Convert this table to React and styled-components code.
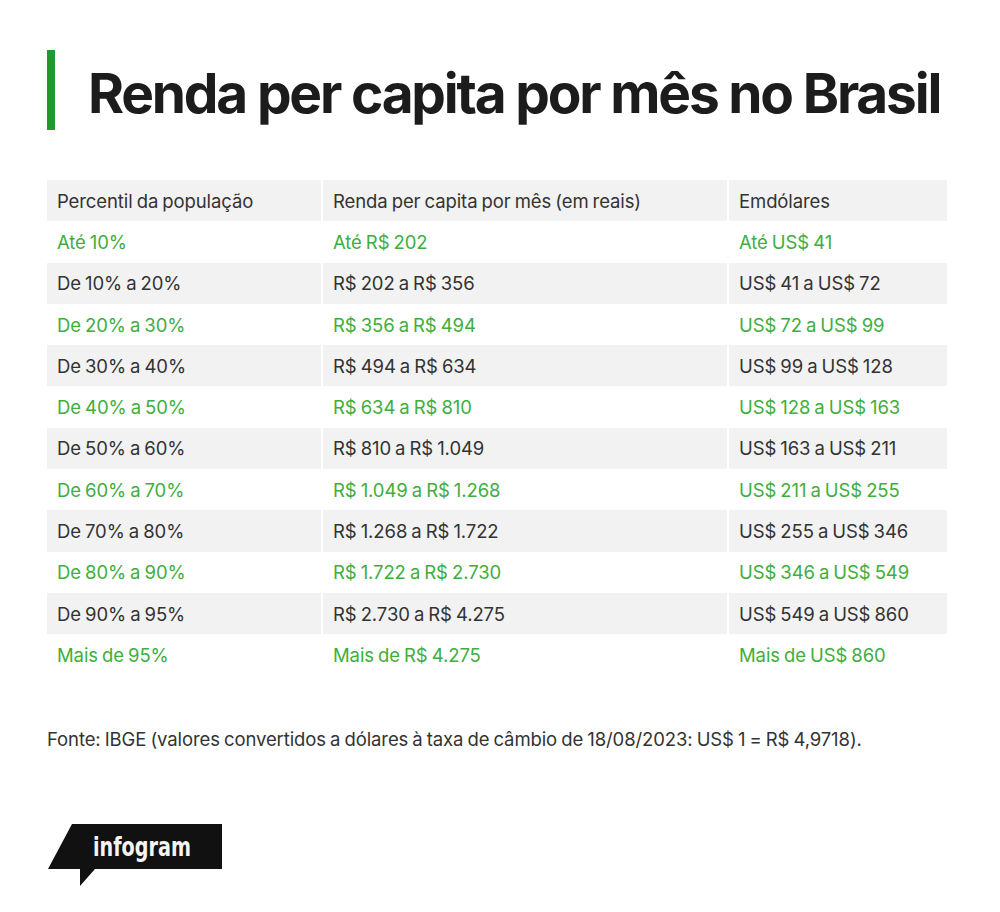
import React from 'react';
import styled, { createGlobalStyle } from 'styled-components';

const GlobalStyle = createGlobalStyle`
  html, body {
    margin: 0;
    padding: 0;
    background: #fff;
  }
  body {
    font-family: Inter, "Liberation Sans", Arial, sans-serif;
    color: #333;
  }
`;

const Page = styled.div`
  width: 1000px;
  height: 912px;
  padding: 50px 0 0 47px;
  box-sizing: border-box;
`;

const Header = styled.div`
  display: flex;
  align-items: center;
  gap: 33px;
  height: 80px;
`;

const Bar = styled.div`
  width: 8px;
  height: 80px;
  background: #1f9a2c;
`;

const Title = styled.h1`
  margin: 0;
  padding-top: 6px;
  font-family: Inter, "Liberation Sans", Arial, sans-serif;
  font-weight: 700;
  font-size: 55px;
  letter-spacing: -2.2px;
  color: #1c1c1c;
  white-space: nowrap;
`;

const Table = styled.div`
  margin-top: 50px;
  width: 900px;
`;

const Row = styled.div`
  display: grid;
  grid-template-columns: 274px 404px 218px;
  column-gap: 2px;
  height: 41.3px;
`;

const Cell = styled.div`
  display: flex;
  align-items: center;
  padding-left: 10px;
  background: ${p => (p.$shaded ? '#f2f2f2' : '#fff')};
  color: ${p => (p.$green ? '#3fae3c' : '#333')};
  font-size: 18.5px;
  letter-spacing: -0.1px;
  word-spacing: -1px;
  white-space: nowrap;
`;

const Source = styled.p`
  margin: 52px 0 0;
  font-size: 18.5px;
  letter-spacing: -0.1px;
  word-spacing: -1px;
  color: #333;
`;

const Logo = styled.div`
  margin-top: 74px;
  width: 210px;
  height: 64px;
`;

const header = ['Percentil da população', 'Renda per capita por mês (em reais)', 'Emdólares'];

const rows = [
  ['Até 10%', 'Até R$ 202', 'Até US$ 41'],
  ['De 10% a 20%', 'R$ 202 a R$ 356', 'US$ 41 a US$ 72'],
  ['De 20% a 30%', 'R$ 356 a R$ 494', 'US$ 72 a US$ 99'],
  ['De 30% a 40%', 'R$ 494 a R$ 634', 'US$ 99 a US$ 128'],
  ['De 40% a 50%', 'R$ 634 a R$ 810', 'US$ 128 a US$ 163'],
  ['De 50% a 60%', 'R$ 810 a R$ 1.049', 'US$ 163 a US$ 211'],
  ['De 60% a 70%', 'R$ 1.049 a R$ 1.268', 'US$ 211 a US$ 255'],
  ['De 70% a 80%', 'R$ 1.268 a R$ 1.722', 'US$ 255 a US$ 346'],
  ['De 80% a 90%', 'R$ 1.722 a R$ 2.730', 'US$ 346 a US$ 549'],
  ['De 90% a 95%', 'R$ 2.730 a R$ 4.275', 'US$ 549 a US$ 860'],
  ['Mais de 95%', 'Mais de R$ 4.275', 'Mais de US$ 860'],
];

function InfogramLogo() {
  return (
    <svg width="210" height="64" viewBox="0 0 210 64">
      <path d="M25 0 H175 V45 H48 L33 62 V45 H1 Z" fill="#111" />
      <text
        x="46"
        y="32"
        fill="#f4f4f4"
        fontFamily="'DejaVu Sans', sans-serif"
        fontWeight="700"
        fontSize="27"
        textLength="98"
        lengthAdjust="spacingAndGlyphs"
      >
        infogram
      </text>
    </svg>
  );
}

export default function App() {
  return (
    <Page>
      <GlobalStyle />
      <Header>
        <Bar />
        <Title>Renda per capita por mês no Brasil</Title>
      </Header>

      <Table>
        <Row>
          {header.map(h => (
            <Cell key={h} $shaded>{h}</Cell>
          ))}
        </Row>
        {rows.map((r, i) => (
          <Row key={r[0]}>
            {r.map(c => (
              <Cell key={c} $shaded={i % 2 === 1} $green={i % 2 === 0}>{c}</Cell>
            ))}
          </Row>
        ))}
      </Table>

      <Source>
        Fonte: IBGE (valores convertidos a dólares à taxa de câmbio de 18/08/2023: US$ 1 = R$ 4,9718).
      </Source>

      <Logo>
        <InfogramLogo />
      </Logo>
    </Page>
  );
}
